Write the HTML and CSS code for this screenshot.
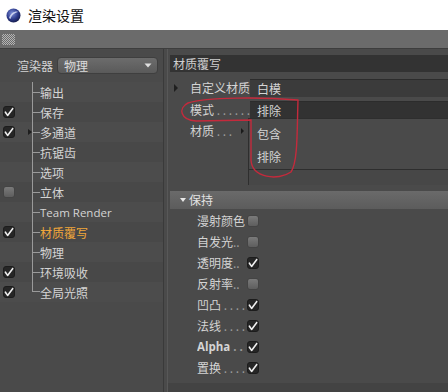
FILE: index.html
```html
<!DOCTYPE html>
<html lang="zh-CN">
<head>
    <meta charset="UTF-8">
    <title>渲染设置</title>
    <link rel="stylesheet" href="styles.css">
</head>
<body>
    <div class="titlebar">
        <svg class="logo" width="15" height="15" viewBox="0 0 15 15">
            <defs>
                <radialGradient id="sph" cx="0.4" cy="0.35" r="0.7">
                    <stop offset="0" stop-color="#7d8fd8"/>
                    <stop offset="0.6" stop-color="#2c3a8a"/>
                    <stop offset="1" stop-color="#141a45"/>
                </radialGradient>
            </defs>
            <circle cx="7.5" cy="7.5" r="7" fill="url(#sph)"/>
            <path d="M3 10 C5 4, 10 2.5, 13 4 C10 4, 6 6, 4.5 11 Z" fill="#d8def5" opacity="0.85"/>
        </svg>
        <span class="title">渲染设置</span>
    </div>
    <div class="toolbar">
        <div class="grip"></div>
    </div>
    <div class="main">
        <div class="left">
            <div class="renderer">
                <span class="renderer-label">渲染器</span>
                <div class="dropdown">
                    <span>物理</span>
                    <svg width="8" height="5" viewBox="0 0 8 5"><path d="M0.5 0.5 L7.5 0.5 L4 4.5 Z" fill="#e0e0e0"/></svg>
                </div>
            </div>
            <div class="tree">
                <div class="tree-row"><div class="lead"></div><div class="branch"></div><span>输出</span></div>
                <div class="tree-row"><div class="lead"><span class="chk on"></span></div><div class="branch"></div><span>保存</span></div>
                <div class="tree-row"><div class="lead"><span class="chk on"></span><span class="expand"></span></div><div class="branch"></div><span>多通道</span></div>
                <div class="tree-row"><div class="lead"></div><div class="branch"></div><span>抗锯齿</span></div>
                <div class="tree-row"><div class="lead"></div><div class="branch"></div><span>选项</span></div>
                <div class="tree-row"><div class="lead"><span class="chk off"></span></div><div class="branch"></div><span>立体</span></div>
                <div class="tree-row"><div class="lead"></div><div class="branch"></div><span class="latin">Team Render</span></div>
                <div class="tree-row"><div class="lead"><span class="chk on"></span></div><div class="branch"></div><span class="active">材质覆写</span></div>
                <div class="tree-row"><div class="lead"></div><div class="branch"></div><span>物理</span></div>
                <div class="tree-row"><div class="lead"><span class="chk on"></span></div><div class="branch"></div><span>环境吸收</span></div>
                <div class="tree-row"><div class="lead"><span class="chk on"></span></div><div class="branch last"></div><span>全局光照</span></div>
            </div>
        </div>
        <div class="divider"></div>
        <div class="right">
            <div class="panel-head">材质覆写</div>
            <div class="prop">
                <span class="tri-right"></span>
                <span class="prop-label">自定义材质</span>
                <div class="field light">白模</div>
            </div>
            <div class="prop">
                <span class="prop-label pad">模式 <span class="dots">. . . . . .</span></span>
                <div class="field dark">排除</div>
            </div>
            <div class="prop list-prop">
                <span class="prop-label pad">材质 <span class="dots">. . .</span></span>
                <span class="tri-small"></span>
                <div class="listbox">
                    <div class="list-items">
                        <div class="list-item">包含</div>
                        <div class="list-item">排除</div>
                    </div>
                    <div class="list-foot"></div>
                </div>
            </div>
            <div class="section-head"><span class="tri-down"></span>保持</div>
            <div class="checks">
                <div class="check-row"><span class="check-label">漫射颜色</span><span class="chk off"></span></div>
                <div class="check-row"><span class="check-label">自发光<span class="dots">..</span></span><span class="chk off"></span></div>
                <div class="check-row"><span class="check-label">透明度<span class="dots">..</span></span><span class="chk on"></span></div>
                <div class="check-row"><span class="check-label">反射率<span class="dots">..</span></span><span class="chk off"></span></div>
                <div class="check-row"><span class="check-label">凹凸 <span class="dots">. . . .</span></span><span class="chk on"></span></div>
                <div class="check-row"><span class="check-label">法线 <span class="dots">. . . .</span></span><span class="chk on"></span></div>
                <div class="check-row"><span class="check-label latin-bold">Alpha <span class="dots">. .</span></span><span class="chk on"></span></div>
                <div class="check-row"><span class="check-label">置换 <span class="dots">. . . .</span></span><span class="chk on"></span></div>
            </div>
            <div class="statusbar"></div>
        </div>
    </div>
    <svg class="marks" width="448" height="392" viewBox="0 0 448 392">
        <path d="M298 100 C262 97, 206 97, 188 103 C178 108, 180 120, 196 121 L251 120 L251 160 C252 178, 278 181, 291 172 C298 162, 297 130, 298 100"
              fill="none" stroke="#c42a3c" stroke-width="1.4" stroke-linecap="round"/>
    </svg>
</body>
</html>
```

FILE: styles.css
```css
body {
    margin: 0;
    width: 448px;
    height: 392px;
    overflow: hidden;
    position: relative;
    font-family: "Noto Sans CJK SC", "Noto Sans", sans-serif;
    font-size: 12px;
    color: #d4d4d4;
    background: #4a4a4a;
}
.titlebar {
    height: 30px;
    background: #ffffff;
    display: flex;
    align-items: center;
    padding-left: 6px;
    gap: 7px;
}
.title {
    color: #111;
    font-size: 14px;
}
.toolbar {
    height: 18px;
    background: #6b6b6b;
    border-bottom: 1px solid #3d3d3d;
    display: flex;
    align-items: center;
}
.grip {
    width: 13px;
    height: 11px;
    margin-left: 2px;
    background: repeating-conic-gradient(#b4b4b4 0 25%, #6b6b6b 0 50%) 0 0 / 2px 2px;
}
.main {
    display: flex;
    height: 343px;
}
.left {
    width: 163px;
    background: #4a4a4a;
}
.divider {
    width: 5px;
    background: #4a4a4a;
    border-left: 1px solid #3a3a3a;
    border-right: 1px solid #585858;
    box-sizing: border-box;
}
.renderer {
    display: flex;
    align-items: center;
    height: 33px;
    padding-left: 17px;
    gap: 4px;
}
.renderer-label {
    width: 36px;
}
.dropdown {
    width: 101px;
    height: 17px;
    box-sizing: border-box;
    border-radius: 4px;
    background: linear-gradient(#6c6c6c, #5a5a5a);
    border: 1px solid #3f3f3f;
    display: flex;
    align-items: center;
    justify-content: space-between;
    padding: 0 5px 0 6px;
    color: #dcdcdc;
}
.tree-row {
    display: grid;
    grid-template-columns: 32px 8px 1fr;
    align-items: center;
    height: 20px;
    background: #4c4c4c;
}
.tree-row:nth-child(even) {
    background: #484848;
}
.lead {
    display: flex;
    align-items: center;
    height: 20px;
    padding-left: 3px;
}
.expand {
    margin-left: auto;
    margin-right: 0;
    border-left: 4px solid #1e1e1e;
    border-top: 3px solid transparent;
    border-bottom: 3px solid transparent;
}
.branch {
    height: 20px;
    border-left: 1px solid #9a9a9a;
    background: linear-gradient(#9a9a9a, #9a9a9a) no-repeat 0 50% / 100% 1px;
}
.branch.last {
    height: 10px;
    align-self: start;
    background-position: 0 100%;
}
.tree-row span {
    white-space: nowrap;
}
.latin {
    font-family: "Open Sans", "Noto Sans", sans-serif;
    font-size: 11.5px;
}
.active {
    color: #f0a63a;
}
.chk {
    display: inline-block;
    width: 12px;
    height: 12px;
    box-sizing: border-box;
    border-radius: 3px;
}
.chk.off {
    background: linear-gradient(#7a7a7a, #5e5e5e);
    border: 1px solid #444;
}
.chk.on {
    background: #262626 url("data:image/svg+xml,%3Csvg xmlns='http://www.w3.org/2000/svg' width='12' height='12'%3E%3Cpath d='M2.4 6.2 L4.6 9.4 L9.8 2.4' fill='none' stroke='%23eeeeee' stroke-width='1.6' stroke-linecap='round' stroke-linejoin='round'/%3E%3C/svg%3E") no-repeat center;
    border: 1px solid #1c1c1c;
}
.right {
    flex: 1;
    display: flex;
    flex-direction: column;
    background: #4a4a4a;
}
.panel-head {
    margin: 6px 0 6px 2px;
    height: 17px;
    line-height: 17px;
    background: #333333;
    padding-left: 3px;
    color: #cfcfcf;
}
.prop {
    display: flex;
    align-items: center;
    height: 19px;
    margin-bottom: 3px;
}
.tri-right {
    margin-left: 6px;
    border-left: 4px solid #1f1f1f;
    border-top: 4px solid transparent;
    border-bottom: 4px solid transparent;
}
.prop-label {
    width: 60px;
    padding-left: 12px;
    white-space: nowrap;
}
.prop-label.pad {
    padding-left: 22px;
    width: 60px;
}
.dots {
    color: #9c9c9c;
}
.field {
    flex: 1;
    height: 18px;
    line-height: 18px;
    padding-left: 7px;
    border-top: 1px solid #2c2c2c;
    box-sizing: border-box;
}
.field.light {
    background: #3b3b3b;
}
.field.dark {
    background: #323232;
}
.list-prop {
    align-items: flex-start;
    height: auto;
    margin-top: -4px;
}
.list-prop .prop-label {
    margin-top: 4px;
    width: 51px;
}
.tri-small {
    margin-top: 10px;
    margin-right: 4px;
    border-left: 3px solid #1a1a1a;
    border-top: 3px solid transparent;
    border-bottom: 3px solid transparent;
}
.listbox {
    flex: 1;
    height: 67px;
    border-left: 1px solid #2e2e2e;
    box-sizing: border-box;
    display: flex;
    flex-direction: column;
}
.list-items {
    height: 52px;
    border-top: 1px solid #2e2e2e;
    border-bottom: 1px solid #2e2e2e;
    padding-top: 6px;
    box-sizing: border-box;
}
.list-item {
    height: 23px;
    padding-left: 8px;
}
.list-foot {
    flex: 1;
    background: #474747;
}
.section-head {
    margin: 3px 0 0 2px;
    height: 18px;
    line-height: 18px;
    background: linear-gradient(#6a6a6a, #5c5c5c);
    display: flex;
    align-items: center;
    gap: 3px;
    padding-left: 10px;
    color: #e2e2e2;
}
.tri-down {
    border-top: 4px solid #e8e8e8;
    border-left: 3px solid transparent;
    border-right: 3px solid transparent;
}
.checks {
    padding-top: 1px;
    flex: 1;
}
.check-row {
    display: flex;
    align-items: center;
    height: 21px;
    padding-left: 29px;
}
.check-label {
    width: 50px;
    white-space: nowrap;
    overflow: hidden;
}
.latin-bold {
    font-family: "Open Sans", "Noto Sans", sans-serif;
    font-weight: bold;
    font-size: 11.5px;
}
.statusbar {
    height: 9px;
    background: #434343;
}
.marks {
    position: absolute;
    left: 0;
    top: 0;
    pointer-events: none;
}
```
